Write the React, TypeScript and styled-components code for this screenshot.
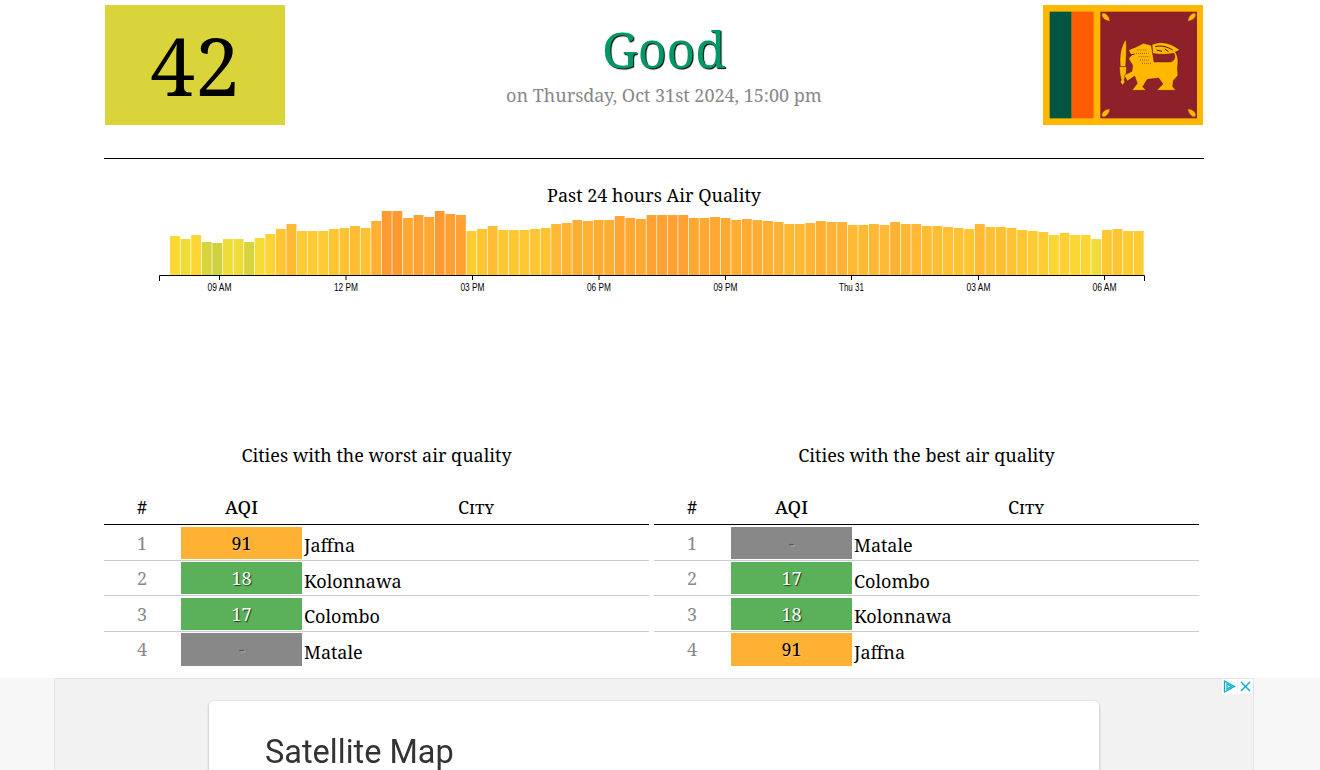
import React from 'react';
import styled, { createGlobalStyle } from 'styled-components';

const GlobalStyle = createGlobalStyle`
    html, body {
        margin: 0;
        padding: 0;
        height: 100%;
        overflow: hidden;
        background: #fff;
        font-family: 'Noto Serif', 'DejaVu Serif', serif;
        color: #000;
    }
`;

const Page = styled.div`
    width: 1100px;
    margin-left: 104px;
    padding-top: 5px;
`;

const Header = styled.header`
    display: flex;
    align-items: flex-start;
    padding: 0 1px;
    height: 120px;
`;

const ScoreBox = styled.div`
    width: 180px;
    height: 120px;
    display: flex;
    align-items: center;
    justify-content: center;
    background: #d9d43a;
    font-size: 80px;
    line-height: 120px;
`;

const Summary = styled.div`
    flex: 1;
    text-align: center;
    padding-top: 12px;
`;

const Status = styled.div`
    font-size: 50px;
    line-height: 65px;
    color: #009966;
    text-shadow: 1px 1px 1px #000;
`;

const Updated = styled.div`
    font-size: 18px;
    line-height: 26px;
    color: #888;
`;

const Rule = styled.hr`
    margin: 33px 0 0;
    border: 0;
    border-top: 1px solid #000;
`;

const ChartTitle = styled.div`
    margin-top: 23px;
    text-align: center;
    font-size: 18px;
    line-height: 26px;
`;

const ChartSvg = styled.svg`
    display: block;
    margin: -2px 0 0 55px;
`;

const TickLabel = styled.text`
    font-family: 'Liberation Sans', sans-serif;
    font-size: 10.5px;
    fill: #000;
    text-anchor: middle;
`;

const Tables = styled.div`
    display: grid;
    grid-template-columns: 545px 545px;
    column-gap: 5px;
    margin-top: 146px;
`;

const TableTitle = styled.div`
    text-align: center;
    font-size: 18px;
    line-height: 26px;
    margin-bottom: 21px;
`;

const HeadRow = styled.div`
    display: grid;
    grid-template-columns: 76px 123px 1fr;
    height: 36px;
    margin-bottom: 0.3px;
    border-bottom: 1px solid #000;
    box-sizing: border-box;
    align-items: center;
    text-align: center;
    font-size: 18px;
    font-weight: 500;
`;

const CityHead = styled.span`
    font-weight: 400;
    font-variant: small-caps;
`;

const Row = styled.div<{ $last?: boolean }>`
    display: grid;
    grid-template-columns: 76px 122px 1fr;
    grid-template-rows: minmax(0, 1fr);
    height: 35.5px;
    box-sizing: border-box;
    padding: 1.7px 0 1px;
    border-bottom: ${p => (p.$last ? '0' : '1px solid #ccc')};
`;

const Rank = styled.div`
    text-align: center;
    color: #888;
    font-size: 18px;
    line-height: 32px;
`;

const AqiCell = styled.div<{ $bg: string; $fg: string; $shadow: string }>`
    margin: 0 0 0 1px;
    background: ${p => p.$bg};
    color: ${p => p.$fg};
    text-align: center;
    font-size: 18px;
    line-height: 32px;
    text-shadow: 1px 1px 1px ${p => p.$shadow};
`;

const City = styled.div`
    font-size: 18px;
    line-height: 32px;
    padding: 2.5px 0 0 2px;
`;

const AdBar = styled.aside`
    position: fixed;
    left: 0;
    right: 0;
    bottom: 0;
    height: 92px;
    background: #f7f7f7;
    display: flex;
    justify-content: center;
    padding-right: 12px;
`;

const AdFrame = styled.div`
    position: relative;
    box-sizing: border-box;
    width: 1200px;
    background: #f2f2f2;
    border: 1px solid #e4e4e4;
    border-bottom: 0;
    padding: 22px 0 0 154px;
`;

const AdCard = styled.div`
    width: 890px;
    height: 120px;
    background: #fff;
    border-radius: 5px;
    box-shadow: 0 1px 3px rgba(0, 0, 0, 0.3);
    padding: 30px 0 0 56px;
    box-sizing: border-box;
    font-family: Roboto, 'Open Sans', sans-serif;
    font-size: 32.5px;
    line-height: 42px;
    color: #333;
`;

const AdIcons = styled.div`
    position: absolute;
    top: 0;
    right: 0;
    display: flex;
    gap: 1px;
`;

const AdIcon = styled.svg`
    display: block;
    background: #fff;
`;

const hourly = [
    39, 36, 40, 33, 32, 36, 36, 33, 37, 41, 46, 51, 44, 44, 44, 46, 47, 49, 47, 54, 64, 64, 57,
    60, 58, 64, 61, 60, 44, 46, 49, 45, 45, 45, 46, 47, 51, 52, 55, 54, 55, 55, 59, 57, 56, 60,
    60, 60, 60, 57, 57, 58, 57, 55, 56, 55, 54, 53, 51, 51, 52, 54, 53, 53, 50, 50, 51, 50, 53,
    51, 51, 49, 49, 48, 47, 46, 51, 48, 48, 47, 45, 44, 43, 40, 42, 40, 40, 36, 45, 46, 44, 44,
];

const ticks = [
    { x: 60.5, label: '09 AM', w: 24 },
    { x: 187, label: '12 PM', w: 24 },
    { x: 313.5, label: '03 PM', w: 24 },
    { x: 440, label: '06 PM', w: 24 },
    { x: 566.5, label: '09 PM', w: 24 },
    { x: 692.5, label: 'Thu 31', w: 25 },
    { x: 819.5, label: '03 AM', w: 24 },
    { x: 945.5, label: '06 AM', w: 24 },
];

// rough aqi scale: green-yellow -> yellow -> orange
const barColor = (v: number) => {
    const stops: [number, number, number, number][] = [
        [32, 206, 209, 64],
        [36, 240, 220, 56],
        [38, 254, 219, 51],
        [46, 255, 197, 51],
        [55, 255, 173, 51],
        [64, 255, 154, 51],
    ];
    for (let i = 1; i < stops.length; i++) {
        if (v <= stops[i][0]) {
            const a = stops[i - 1];
            const b = stops[i];
            const t = (v - a[0]) / (b[0] - a[0]);
            const mix = (n: number) => Math.round(a[n] + (b[n] - a[n]) * t);
            return `rgb(${mix(1)},${mix(2)},${mix(3)})`;
        }
    }
    return 'rgb(255,154,51)';
};

const AirChart = () => (
    <ChartSvg width={990} height={90}>
        {hourly.map((v, i) => (
            <rect
                key={i}
                x={11 + i * 10.59}
                y={69 - v}
                width={9.9}
                height={v}
                fill={barColor(v)}
            />
        ))}
        <path d="M0.5 75V69.5H985.5V75" fill="none" stroke="#000" />
        {ticks.map(t => (
            <g key={t.label}>
                <line x1={t.x} x2={t.x} y1={69} y2={74} stroke="#000" />
                <TickLabel x={t.x} y={85} textLength={t.w} lengthAdjust="spacingAndGlyphs">
                    {t.label}
                </TickLabel>
            </g>
        ))}
    </ChartSvg>
);

const Leaf = ({ transform }: { transform: string }) => (
    <path
        d="M24 25C22 10 12 0 3 2C-3 10 6 23 24 25Z"
        transform={transform}
        fill="#ffb700"
        stroke="#a8641a"
        strokeWidth={1}
    />
);

const Flag = () => (
    <svg width={160} height={120} viewBox="39 15 480 360">
        <rect x={39} y={15} width={480} height={360} fill="#ffb700" />
        <rect x={59} y={35} width={66} height={320} fill="#005641" />
        <rect x={125} y={35} width={66} height={320} fill="#ff5b00" />
        <rect x={211} y={35} width={290} height={320} fill="#8d2029" />
        <Leaf transform="translate(215 38)" />
        <Leaf transform="translate(498 38) scale(-1 1)" />
        <Leaf transform="translate(215 352) scale(1 -1)" />
        <Leaf transform="translate(498 352) scale(-1 -1)" />
        <g stroke="#4a1510" strokeWidth={1.2} fill="#ffb700" strokeLinejoin="round">
            <path d="M288 118C291 150 288 178 287 200L271 200C268 170 272 140 288 118Z" />
            <path d="M268 200H290L288 222L282 240L285 246L278 256L271 246L274 240L270 222Z" />
            <path d="M366 134C395 120 428 132 449 150L436 156C444 170 446 182 442 205L444 226L430 242L428 260L438 271H380L399 252L386 234L352 238L338 260L348 271H306L322 250L314 228L292 243L282 226L306 214L308 196L296 176L304 166L296 150L320 140L340 130L364 136L372 186L420 186C434 184 438 172 432 160C408 164 385 164 368 160Z" />
        </g>
        <path
            d="M376 140C392 135 412 140 428 150M380 150L396 154M404 147L416 155M298 166L314 162"
            fill="none"
            stroke="#4a1510"
            strokeWidth={3}
        />
        <path
            d="M322 150H350M318 160H356M326 170H358M330 180H360M336 190H366"
            fill="none"
            stroke="#7a3a12"
            strokeWidth={2}
            strokeDasharray="3 3"
        />
    </svg>
);

type Entry = { rank: number; aqi: string; city: string };

const CityTable = ({ title, rows }: { title: string; rows: Entry[] }) => (
    <section>
        <TableTitle>{title}</TableTitle>
        <HeadRow>
            <span>#</span>
            <span>AQI</span>
            <CityHead>City</CityHead>
        </HeadRow>
        {rows.map((r, i) => {
            const n = Number(r.aqi);
            const bg = r.aqi === '-' ? '#888888' : n > 50 ? '#ffb133' : '#5ab15a';
            const fg = r.aqi === '-' ? '#555' : n > 50 ? '#000' : '#fff';
            const shadow = n > 50 || r.aqi === '-' ? 'rgba(255,255,255,0.4)' : 'rgba(0,0,0,0.7)';
            return (
                <Row key={r.city} $last={i === rows.length - 1}>
                    <Rank>{r.rank}</Rank>
                    <AqiCell $bg={bg} $fg={fg} $shadow={shadow}>
                        {r.aqi}
                    </AqiCell>
                    <City>{r.city}</City>
                </Row>
            );
        })}
    </section>
);

const worst: Entry[] = [
    { rank: 1, aqi: '91', city: 'Jaffna' },
    { rank: 2, aqi: '18', city: 'Kolonnawa' },
    { rank: 3, aqi: '17', city: 'Colombo' },
    { rank: 4, aqi: '-', city: 'Matale' },
];

const best: Entry[] = [
    { rank: 1, aqi: '-', city: 'Matale' },
    { rank: 2, aqi: '17', city: 'Colombo' },
    { rank: 3, aqi: '18', city: 'Kolonnawa' },
    { rank: 4, aqi: '91', city: 'Jaffna' },
];

const App = () => (
    <>
        <GlobalStyle />
        <Page>
            <Header>
                <ScoreBox>42</ScoreBox>
                <Summary>
                    <Status>Good</Status>
                    <Updated>on Thursday, Oct 31st 2024, 15:00 pm</Updated>
                </Summary>
                <Flag />
            </Header>
            <Rule />
            <ChartTitle>Past 24 hours Air Quality</ChartTitle>
            <AirChart />
            <Tables>
                <CityTable title="Cities with the worst air quality" rows={worst} />
                <CityTable title="Cities with the best air quality" rows={best} />
            </Tables>
        </Page>
        <AdBar>
            <AdFrame>
                <AdCard>Satellite Map</AdCard>
                <AdIcons>
                    <AdIcon width={15} height={15} viewBox="0 0 15 15">
                        <path
                            d="M2.5 2V13L12.5 7.5ZM5 5V10L9.5 7.5Z"
                            fill="none"
                            stroke="#00aecd"
                            strokeWidth={1.3}
                        />
                    </AdIcon>
                    <AdIcon width={15} height={15} viewBox="0 0 15 15">
                        <path d="M3 3L12 12M12 3L3 12" stroke="#00aecd" strokeWidth={1.4} />
                    </AdIcon>
                </AdIcons>
            </AdFrame>
        </AdBar>
    </>
);

export default App;
